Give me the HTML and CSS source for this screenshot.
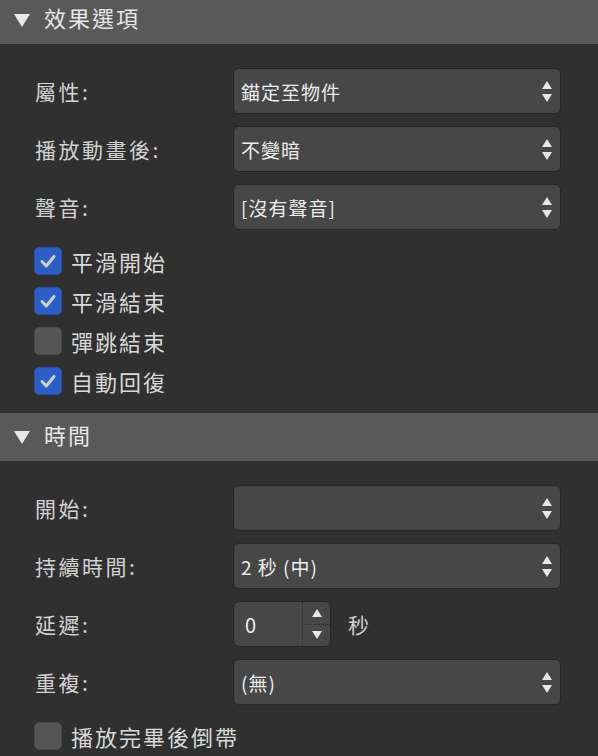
FILE: index.html
```html
<!DOCTYPE html>
<html lang="zh-Hant">
<head>
  <meta charset="UTF-8">
  <meta name="viewport" content="width=device-width, initial-scale=1.0">
  <title>效果選項</title>
  <link rel="stylesheet" href="styles.css">
</head>
<body>
  <div class="inspector">
    <div class="section-head first">
      <span class="disclosure"></span>
      <span class="section-title">效果選項</span>
    </div>
    <div class="section-body">
      <div class="field">
        <span class="field-label">屬性:</span>
        <div class="popup"><span>錨定至物件</span><span class="arrows"><i class="up"></i><i class="down"></i></span></div>
      </div>
      <div class="field">
        <span class="field-label">播放動畫後:</span>
        <div class="popup"><span>不變暗</span><span class="arrows"><i class="up"></i><i class="down"></i></span></div>
      </div>
      <div class="field">
        <span class="field-label">聲音:</span>
        <div class="popup"><span>[沒有聲音]</span><span class="arrows"><i class="up"></i><i class="down"></i></span></div>
      </div>
      <div class="checks">
        <label class="check"><span class="box on"><svg viewBox="0 0 26 26"><path d="M7 13.5 L11.3 18 L19 8.5" /></svg></span>平滑開始</label>
        <label class="check"><span class="box on"><svg viewBox="0 0 26 26"><path d="M7 13.5 L11.3 18 L19 8.5" /></svg></span>平滑結束</label>
        <label class="check"><span class="box"></span>彈跳結束</label>
        <label class="check"><span class="box on"><svg viewBox="0 0 26 26"><path d="M7 13.5 L11.3 18 L19 8.5" /></svg></span>自動回復</label>
      </div>
    </div>

    <div class="section-head">
      <span class="disclosure"></span>
      <span class="section-title">時間</span>
    </div>
    <div class="section-body">
      <div class="field">
        <span class="field-label">開始:</span>
        <div class="popup"><span></span><span class="arrows"><i class="up"></i><i class="down"></i></span></div>
      </div>
      <div class="field">
        <span class="field-label">持續時間:</span>
        <div class="popup"><span>2 秒 (中)</span><span class="arrows"><i class="up"></i><i class="down"></i></span></div>
      </div>
      <div class="field">
        <span class="field-label">延遲:</span>
        <div class="stepper">
          <span class="stepper-value">0</span>
          <span class="stepper-btns"><span class="step"><i class="up"></i></span><span class="step"><i class="down"></i></span></span>
        </div>
        <span class="unit">秒</span>
      </div>
      <div class="field">
        <span class="field-label">重複:</span>
        <div class="popup"><span>(無)</span><span class="arrows"><i class="up"></i><i class="down"></i></span></div>
      </div>
      <div class="checks">
        <label class="check"><span class="box"></span>播放完畢後倒帶</label>
      </div>
    </div>
  </div>
</body>
</html>
```

FILE: styles.css
```css
body { margin: 0; background: #303030; font-family: "Noto Sans CJK TC", "Noto Sans", sans-serif; color: #d4d4d4; }
.inspector { width: 598px; overflow: hidden; }

.section-head { display: flex; align-items: center; height: 48px; padding-left: 14px; background: #595959; }
.section-head.first { margin-top: -4px; }
.disclosure { width: 0; height: 0; border-left: 8px solid transparent; border-right: 8px solid transparent; border-top: 13px solid #e8e8e8; margin-right: 14px; }
.section-title { font-size: 22px; letter-spacing: 2px; color: #e8e8e8; line-height: 1; margin-top: -6px; }

.section-body { padding: 24px 0 12px 35px; }
.field { display: flex; align-items: center; height: 46px; margin-bottom: 12px; }
.field-label { width: 198px; font-size: 21px; letter-spacing: 2.5px; color: #d2d2d2; }

.popup { display: flex; align-items: center; justify-content: space-between; box-sizing: border-box; width: 328px; height: 46px; padding: 0 8px 0 7px; background: #474747; border: 1px solid #262626; border-radius: 6px; font-size: 19px; letter-spacing: 1px; color: #ededed; }
.arrows { display: flex; flex-direction: column; align-items: center; gap: 5px; }
.up, .down { display: block; width: 0; height: 0; border-left: 5px solid transparent; border-right: 5px solid transparent; }
.up { border-bottom: 8px solid #e6e6e6; }
.down { border-top: 8px solid #e6e6e6; }

.stepper { display: flex; box-sizing: border-box; width: 98px; height: 46px; background: #474747; border: 1px solid #262626; border-radius: 6px; }
.stepper-value { flex: 1; display: flex; align-items: center; padding-left: 11px; font-size: 20px; color: #ededed; border-right: 1px dotted #2a2a2a; }
.stepper-btns { display: flex; flex-direction: column; width: 27px; }
.step { flex: 1; display: flex; align-items: center; justify-content: center; }
.step:first-child { border-bottom: 1px dotted #2a2a2a; }
.unit { margin-left: 17px; font-size: 21px; color: #d2d2d2; }

.checks { display: flex; flex-direction: column; margin-top: -1px; margin-left: -1px; }
.check { display: flex; align-items: center; height: 40px; font-size: 22px; letter-spacing: 2px; color: #d8d8d8; }
.box { display: block; box-sizing: border-box; width: 28px; height: 28px; margin-right: 9px; background: #565656; border: 1px solid #4a4a4a; border-radius: 5px; }
.box.on { background: #2e5ec4; border-color: #2852ad; }
.box svg { display: block; width: 26px; height: 26px; }
.box path { fill: none; stroke: #d0d0d0; stroke-width: 3; stroke-linecap: round; stroke-linejoin: round; }
```
